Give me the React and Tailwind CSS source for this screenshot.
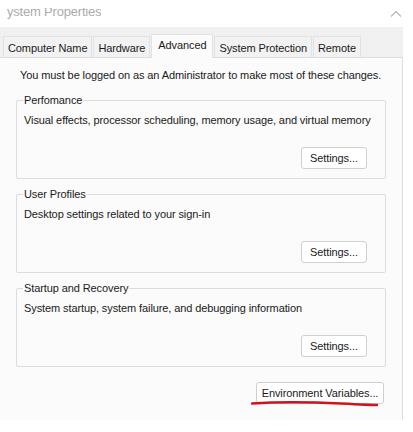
import React from "react";

const tabs = ["Computer Name", "Hardware", "Advanced", "System Protection", "Remote"];

const groups = [
  { title: "Perfomance", text: "Visual effects, processor scheduling, memory usage, and virtual memory" },
  { title: "User Profiles", text: "Desktop settings related to your sign-in" },
  { title: "Startup and Recovery", text: "System startup, system failure, and debugging information" },
];

function Group({ title, text }) {
  return (
    <fieldset className="border border-[#dcdcdc] rounded-[2px] w-[370px] h-[86px] px-[7px]">
      <legend className="px-[1px] ml-[-1px] leading-[14px]">{title}</legend>
      <div className="mt-[6px] leading-[14px]">{text}</div>
      <div className="flex justify-end mt-[20px] pr-[11px]">
        <button className="w-[66px] h-[22px] bg-white border border-[#cfcfcf] rounded-[3px] leading-[14px]">
          Settings...
        </button>
      </div>
    </fieldset>
  );
}

export default function App() {
  return (
    <div
      className="w-[413px] h-[432px] bg-white overflow-hidden text-[11px] tracking-[-0.1px] text-[#1a1a1a] whitespace-nowrap"
      style={{ fontFamily: '"Liberation Sans", Arial, sans-serif' }}
    >
      {/* title bar */}
      <div className="h-[27px] flex justify-between items-start">
        <div className="ml-[7px] mt-[8px] h-[11px] overflow-hidden">
          <div className="mt-[-4px] text-[13px] leading-[16px] text-[#ababab] tracking-[-0.2px]">ystem Properties</div>
        </div>
        <svg className="mr-[11px] mt-[10px]" width="12" height="8" viewBox="0 0 12 8" fill="none">
          <path d="M1 6.5 L6 1.5 L11 6.5" stroke="#b5b5b5" strokeWidth="1.2" />
        </svg>
      </div>

      {/* tab strip */}
      <div className="w-[403px] h-[30px] bg-[#f0f0f0] flex items-end pl-[3px] gap-[1px]">
        {tabs.map((t) =>
          t === "Advanced" ? (
            <div
              key={t}
              className="h-[24px] px-[6px] pt-[3px] leading-[14px] bg-[#fbfbfb] border border-b-0 border-[#e2e2e2] mb-[-1px] relative z-10"
            >
              {t}
            </div>
          ) : (
            <div
              key={t}
              className="h-[21px] px-[4px] pt-[4px] leading-[14px] bg-[#f2f2f2] border border-b-0 border-[#e2e2e2]"
            >
              {t}
            </div>
          )
        )}
      </div>

      {/* panel */}
      <div className="w-[403px] h-[363px] bg-[#fbfbfb] border-r border-t border-[#dddddd] pl-[16px] pt-[10px]">
        <div className="pl-[4px] leading-[15px]">
          You must be logged on as an Administrator to make most of these changes.
        </div>
        <div className="flex flex-col gap-[8px] mt-[10px]">
          {groups.map((g) => (
            <Group key={g.title} {...g} />
          ))}
        </div>
        <div className="flex justify-end w-[368px] mt-[15px] relative">
          <button className="w-[128px] h-[22px] bg-white border border-[#cfcfcf] rounded-[3px] leading-[14px]">
            Environment Variables...
          </button>
          <svg className="absolute left-[235px] top-[18px]" width="130" height="8" viewBox="0 0 130 8" fill="none">
            <path d="M1 3.5 C30 1.5, 60 2, 90 3.5 S120 5, 126 5" stroke="#d0131a" strokeWidth="2.4" strokeLinecap="round" />
          </svg>
        </div>
      </div>
    </div>
  );
}
